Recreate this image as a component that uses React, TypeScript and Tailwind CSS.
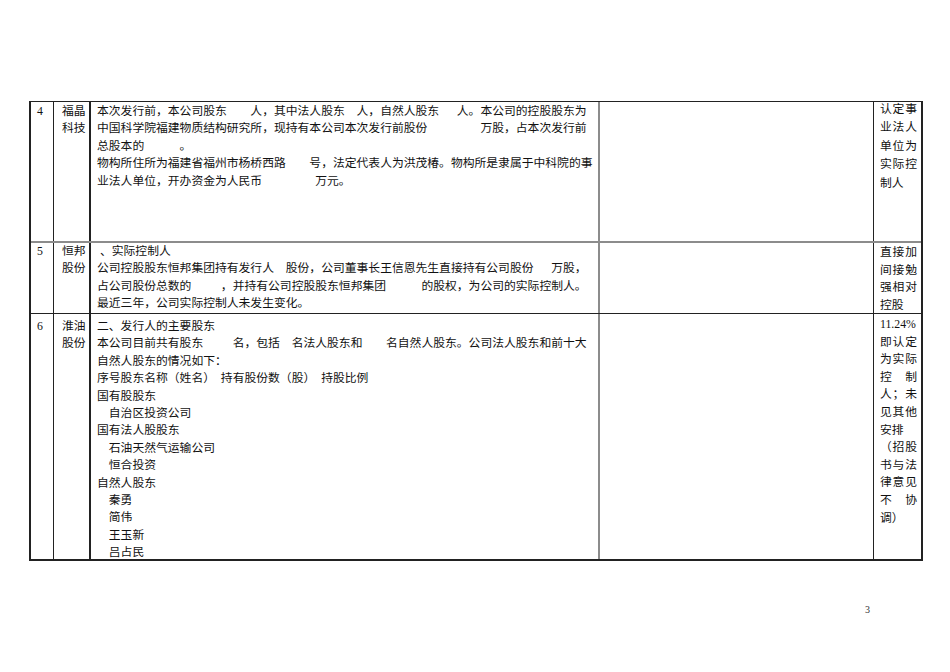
import React from 'react';

// 招股书核查表（第 3 页）

type Row = {
  no: string;
  name: [string, string];
  height: string;
  bottom: string;
  body: string[];
  bodyPad: string;
  note: string[];
  notePad: string;
  noteLh: string;
};

const ROWS: Row[] = [
  {
    no: '4',
    name: ['福晶', '科技'],
    height: 'h-[141px]',
    bottom: 'border-b-2 border-[#8c8c8c]',
    body: [
      '本次发行前，本公司股东　　人，其中法人股东　人，自然人股东　\u2002人。本公司的控股股东为',
      '中国科学院福建物质结构研究所，现持有本公司本次发行前股份　　　　\u2002万股，占本次发行前',
      '总股本的　　　。',
      '物构所住所为福建省福州市杨桥西路　　号，法定代表人为洪茂椿。物构所是隶属于中科院的事',
      '业法人单位，开办资金为人民币　　　　\u2002万元。',
    ],
    bodyPad: 'pt-[1px]',
    note: ['认|定|事', '业|法|人', '单|位|为', '实|际|控', '制人'],
    notePad: '-mt-[2px]',
    noteLh: 'leading-[18.4px]',
  },
  {
    no: '5',
    name: ['恒邦', '股份'],
    height: 'h-[71px]',
    bottom: 'border-b border-[#222]',
    body: [
      '\u00a0、实际控制人',
      '公司控股股东恒邦集团持有发行人　股份，公司董事长王信恩先生直接持有公司股份　\u2002万股，',
      '占公司股份总数的　　\u2002，并持有公司控股股东恒邦集团　　　的股权，为公司的实际控制人。',
      '最近三年，公司实际控制人未发生变化。',
    ],
    bodyPad: 'pt-0',
    note: ['直|接|加', '间|接|勉', '强|相|对', '控股'],
    notePad: 'pt-[1px]',
    noteLh: 'leading-[17.6px]',
  },
  {
    no: '6',
    name: ['淮油', '股份'],
    height: 'h-[247px]',
    bottom: 'border-b-2 border-[#222]',
    body: [
      '二、发行人的主要股东',
      '本公司目前共有股东　　\u2002名，包括　名法人股东和　　名自然人股东。公司法人股东和前十大',
      '自然人股东的情况如下：',
      '序号股东名称（姓名）\u00a0\u00a0持有股份数（股）\u00a0\u00a0持股比例',
      '国有股股东',
      '　自治区投资公司',
      '国有法人股股东',
      '　石油天然气运输公司',
      '　恒合投资',
      '自然人股东',
      '　秦勇',
      '　简伟',
      '　王玉新',
      '　吕占民',
    ],
    bodyPad: 'pt-[4px]',
    note: [
      '11.24%',
      '即|认|定',
      '为|实|际',
      '控|制',
      '人|；|未',
      '见|其|他',
      '安排',
      '（|招|股',
      '书|与|法',
      '律|意|见',
      '不|协',
      '调）',
    ],
    notePad: 'pt-[2px]',
    noteLh: 'leading-[17.6px]',
  },
];

function NoteLine({ text }: { text: string }) {
  if (!text.includes('|')) return <div className="whitespace-nowrap">{text}</div>;
  return (
    <div className="flex w-[37px] justify-between">
      {text.split('|').map((c, i) => (
        <span key={i}>{c}</span>
      ))}
    </div>
  );
}

export default function App() {
  return (
    <div className="min-h-[672px] w-[950px] bg-white pl-[29px] pt-[101px] text-[11.8px] text-[#111] [font-family:'Liberation_Serif','Noto_Sans_CJK_SC',serif]">
      {/* Table */}
      <div className="flex w-[894px] flex-col border-t border-l-2 border-r-2 border-[#222]">
        {ROWS.map((row) => (
          <div key={row.no} className={`flex ${row.height} ${row.bottom}`}>
            <div className={`w-[23px] shrink-0 border-r border-[#222] pl-[6px] leading-[17.4px] ${row.bodyPad}`}>
              {row.no}
            </div>
            <div className={`w-[37px] shrink-0 border-r-2 border-[#222] pl-[8px] leading-[17.4px] ${row.bodyPad}`}>
              <div>{row.name[0]}</div>
              <div>{row.name[1]}</div>
            </div>
            <div className={`w-[509px] shrink-0 border-r-2 border-[#8c8c8c] pl-[6px] leading-[17.4px] ${row.bodyPad}`}>
              {row.body.map((line, i) => (
                <div key={i} className="whitespace-pre">
                  {line}
                </div>
              ))}
            </div>
            <div className="w-[274px] shrink-0 border-r border-[#222]" />
            <div className="flex-1 pl-[6px]">
              <div className={`${row.notePad} ${row.noteLh}`}>
                {row.note.map((line, i) => (
                  <NoteLine key={i} text={line} />
                ))}
              </div>
            </div>
          </div>
        ))}
      </div>

      {/* Page number */}
      <div className="mt-[43px] pl-[836px] text-[10px] leading-[12px] text-[#333]">3</div>
    </div>
  );
}
